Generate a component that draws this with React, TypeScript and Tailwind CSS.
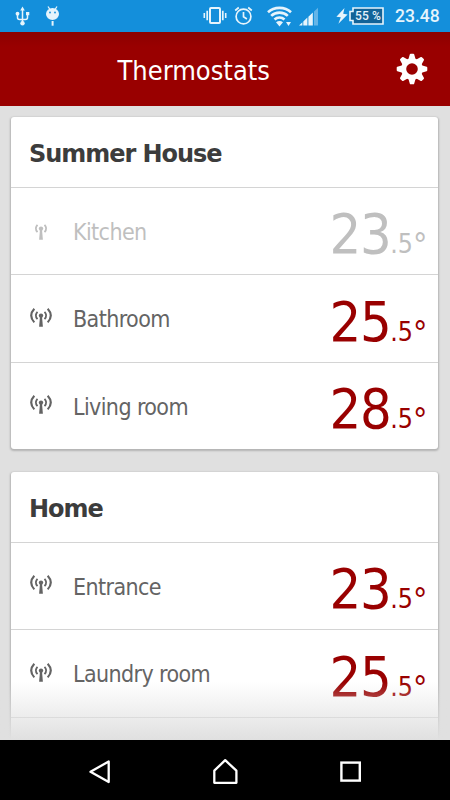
import React from 'react';

type Room = {
  name: string;
  whole: number;
  fraction: number;
  offline?: boolean;
};

const summerHouse: Room[] = [
  { name: 'Kitchen', whole: 23, fraction: 5, offline: true },
  { name: 'Bathroom', whole: 25, fraction: 5 },
  { name: 'Living room', whole: 28, fraction: 5 },
];

const home: Room[] = [
  { name: 'Entrance', whole: 23, fraction: 5 },
  { name: 'Laundry room', whole: 25, fraction: 5 },
];

const StatusBar: React.FC = () => (
  <div className="flex h-[31.5px] shrink-0 items-start bg-[#148fdb] text-[#e6f4fc]">
    <svg className="ml-[15px] mt-[6px]" width="15" height="21" viewBox="0 0 15 21" fill="none" stroke="currentColor" strokeWidth="1.5">
      <path d="M7.5 3v14M2.5 9v2.5q0 2 2 2h6q2 0 2-2V9" />
      <path d="M7.5 .5l2.3 4H5.2zM11 6h3.3v3.3H11z" fill="currentColor" stroke="none" />
      <circle cx="2.5" cy="7.7" r="1.9" fill="currentColor" stroke="none" />
      <circle cx="7.5" cy="17.3" r="2.2" fill="currentColor" stroke="none" />
    </svg>
    <svg className="ml-[15px] mt-[5px]" width="15" height="22" viewBox="0 0 15 22">
      <path d="M3 1.5l2 3M12 1.5l-2 3" stroke="currentColor" strokeWidth="1.3" />
      <ellipse cx="7.5" cy="9" rx="6.5" ry="6" fill="currentColor" />
      <path d="M6.6 16h2v4.7h-2z" fill="currentColor" />
      <circle cx="5" cy="7.5" r=".9" fill="#148fdb" />
      <circle cx="10" cy="7.5" r=".9" fill="#148fdb" />
    </svg>

    <svg className="ml-[143px] mt-[6px]" width="24" height="19" viewBox="0 0 24 19" fill="none" stroke="currentColor">
      <rect x="7" y="1.9" width="10" height="15.2" rx="1" strokeWidth="2" />
      <path d="M4.2 4.8v9.4M19.8 4.8v9.4" strokeWidth="1.7" />
      <path d="M1.3 7v5M22.7 7v5" strokeWidth="1.6" />
    </svg>
    <svg className="ml-[7px] mt-[6px]" width="19" height="20" viewBox="0 0 19 20" fill="none" stroke="currentColor" strokeWidth="1.7">
      <circle cx="9.5" cy="10.5" r="7.4" />
      <path d="M9.5 6v4.8l3.4 2.2M1.2 4.5l3.6-3M17.8 4.5l-3.6-3" />
    </svg>
    <svg className="ml-[14px] mt-[6px]" width="25" height="21" viewBox="0 0 25 21" fill="none" stroke="currentColor" strokeWidth="2.6">
      <path d="M1 6.2C7 .4 18 .4 24 6.2" />
      <path d="M4.2 9.9c4.4-4.4 12.2-4.4 16.6 0" />
      <path d="M7.5 13.5c2.8-2.7 7.2-2.7 10 0" />
      <path d="M9 16.2q3.5-2.4 7 0L12.5 20.4zM19 16h5l-2.5 4z" fill="currentColor" stroke="none" />
    </svg>
    <svg className="ml-[7px] mt-[7px]" width="20" height="19" viewBox="0 0 20 19">
      <path d="M0 18.5L3.4 15.3v3.2zM4.3 14.4L8.4 10.6v7.9H4.3zM9.4 9.7L13.8 5.6v12.9H9.4z" fill="currentColor" />
      <path d="M15 4.5L19 .8v17.7h-4z" fill="#64b5e8" />
    </svg>
    <svg className="ml-[17px] mt-[8px]" width="12" height="16" viewBox="0 0 12 16" fill="currentColor">
      <path d="M8.5 0L.4 8.8l4.4.4L2.4 15.8 11.6 6.4 7.2 5.8z" />
    </svg>
    <div className="relative ml-px mt-[7px] h-[18px] w-[35px]">
      <svg width="35" height="18" viewBox="0 0 35 18">
        <path d="M4 1h30v16H4v-3.5H1v-9h3z" fill="#126398" stroke="#e6f4fc" strokeWidth="1.6" />
      </svg>
      <span className="absolute left-[6px] top-[3px] whitespace-nowrap font-[Roboto,sans-serif] text-[12px] leading-[12px] font-medium tracking-[0.1px]">55 %</span>
    </div>
    <span className="ml-[11px] mt-[7px] font-[Roboto,sans-serif] text-[17.5px] leading-[19px] font-medium">23.48</span>
  </div>
);

const GearIcon: React.FC = () => (
  <svg width="32" height="32" viewBox="-16 -16 32 32" fill="none" stroke="#fff">
    <circle r="8.3" strokeWidth="5" />
    {[0, 45, 90, 135, 180, 225, 270, 315].map((angle) => (
      <path key={angle} transform={`rotate(${angle})`} d="M-2.6-10L-1.3-14.4h2.6L2.6-10z" fill="#fff" strokeWidth="1.8" strokeLinejoin="round" />
    ))}
  </svg>
);

const SignalIcon: React.FC<{ weak?: boolean }> = ({ weak }) => (
  <svg width="24" height="20" viewBox="0 0 24 20" fill="none" stroke="currentColor">
    <circle cx="12" cy="7.6" r="2.2" fill="currentColor" stroke="none" />
    <path d="M11 8.5h2l.9 10.3h-3.8z" fill="currentColor" stroke="none" />
    <path d="M8.5 3.9q-3.4 3.5 0 7.2M15.5 3.9q3.4 3.5 0 7.2" strokeWidth="1.8" />
    {!weak && <path d="M5.3 .8q-6.2 6.8 0 13.6M18.7 .8q6.2 6.8 0 13.6" strokeWidth="2.1" />}
  </svg>
);

const RoomRow: React.FC<{ room: Room }> = ({ room }) => (
  <div className={`flex h-[87.33px] shrink-0 items-start border-t border-[#d4d4d4] pl-[18px] pr-[12px] ${room.offline ? 'text-[#bfbfbf]' : 'text-[#646464]'}`}>
    <div className="mt-[32.5px] w-[44px]">
      <SignalIcon weak={room.offline} />
    </div>
    <span className="mt-[33px] text-[23px] leading-none tracking-[-0.6px]">{room.name}</span>
    <div className={`ml-auto mt-[18.3px] flex items-baseline leading-none ${room.offline ? 'text-[#bfbfbf]' : 'text-[#990000]'}`}>
      <span className="text-[55.5px] leading-none tracking-[-1.4px]">{room.whole}</span>
      <span className="text-[26.5px] leading-none">.{room.fraction}</span>
      <span className="w-[13px] translate-y-[3px] text-[32px] leading-none">°</span>
    </div>
  </div>
);

const HouseCard: React.FC<{ title: string; rooms: Room[]; children?: React.ReactNode }> = ({ title, rooms, children }) => (
  <section className="shrink-0 overflow-hidden rounded-[3px] bg-white shadow-[0_1px_2px_1px_rgba(0,0,0,0.2)]">
    <h2 className="h-[70px] pl-[18px] pt-[25px] font-['DejaVu_Sans',sans-serif] text-[24px] leading-none font-bold tracking-[-1.05px] text-[#3c3c3c]">{title}</h2>
    {rooms.map((room) => (
      <RoomRow key={room.name} room={room} />
    ))}
    {children}
  </section>
);

const NavBar: React.FC = () => (
  <nav className="flex h-[60px] shrink-0 items-start bg-black">
    <svg className="ml-[88px] mt-[19px]" width="24" height="26" viewBox="0 0 24 26" fill="none" stroke="#fff" strokeWidth="2.3">
      <path d="M20.7 2.5v20.5L2.5 12.8z" strokeLinejoin="round" />
    </svg>
    <svg className="ml-[100px] mt-[18px]" width="28" height="28" viewBox="0 0 28 28" fill="none" stroke="#fff" strokeWidth="2.3">
      <path d="M2.3 24.8V12.7L13.2 2.2l11.2 10.5v12.1z" strokeLinejoin="round" />
    </svg>
    <svg className="ml-[100px] mt-[21px]" width="22" height="22" viewBox="0 0 22 22" fill="none" stroke="#fff" strokeWidth="2.4">
      <rect x="1.4" y="1.6" width="18.4" height="18" />
    </svg>
  </nav>
);

const App: React.FC = () => {
  return (
    <div className="flex h-[800px] w-[450px] flex-col overflow-hidden bg-[#e0e0e0] font-['DejaVu_Sans_Condensed','DejaVu_Sans',sans-serif]">
      <StatusBar />
      <header className="flex h-[74.5px] shrink-0 items-start bg-linear-to-b from-[#8c0000] to-[#990000] to-20%">
        <h1 className="ml-[117.5px] mt-[25px] text-[27px] leading-none text-white">Thermostats</h1>
        <div className="ml-auto mr-[22px] mt-[21px]">
          <GearIcon />
        </div>
      </header>
      <main className="relative flex h-[634px] shrink-0 flex-col gap-[23px] overflow-hidden pl-[11px] pr-[12px] pt-[11px]">
        <HouseCard title="Summer House" rooms={summerHouse} />
        <HouseCard title="Home" rooms={home}>
          <div className="h-[87.5px] border-t border-[#d4d4d4]" />
        </HouseCard>
        <div className="absolute inset-x-0 bottom-0 h-[58px] bg-linear-to-b from-[#e0e0e0]/0 to-[#e0e0e0]" />
      </main>
      <NavBar />
    </div>
  );
};

export default App;
